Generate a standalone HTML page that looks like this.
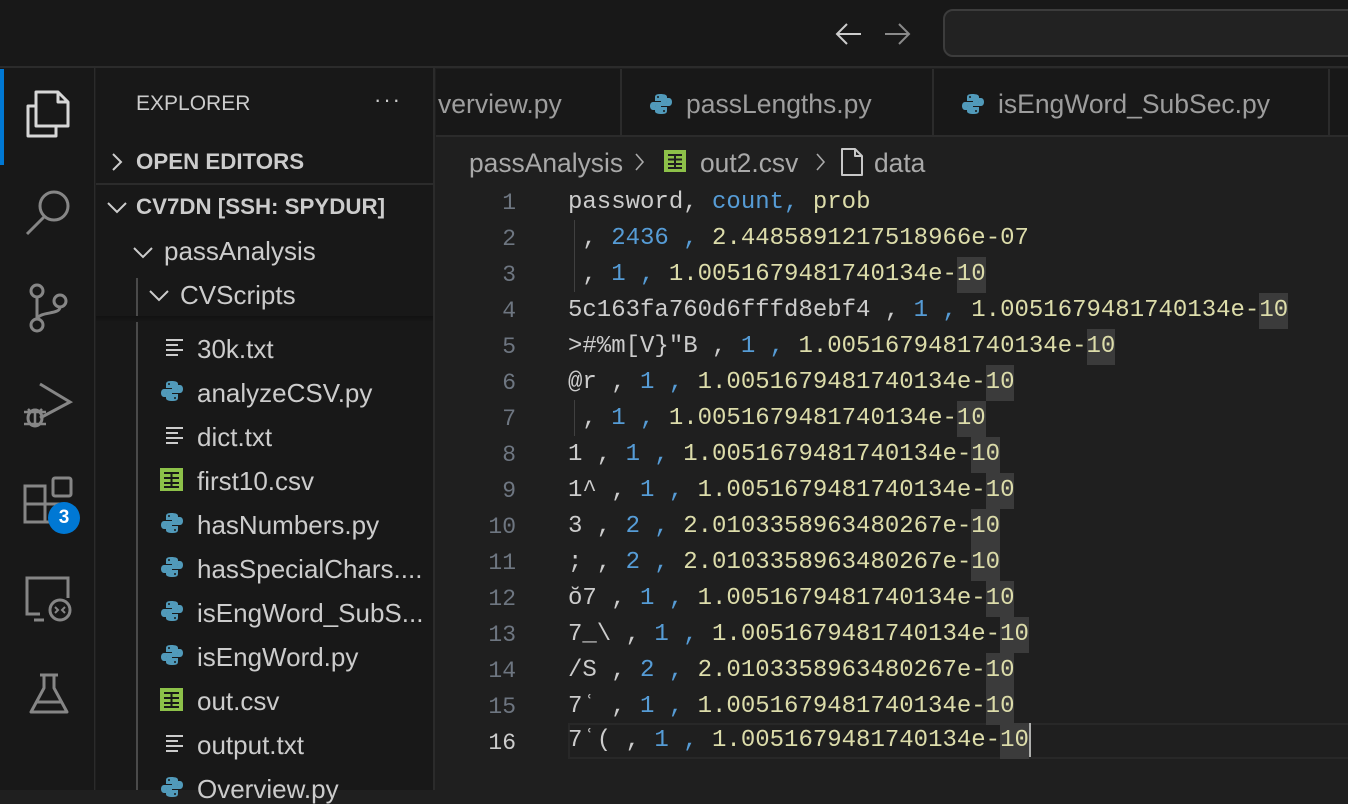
<!DOCTYPE html>
<html><head><meta charset="utf-8"><style>
*{margin:0;padding:0;box-sizing:border-box}
body{width:1348px;height:790px;overflow:hidden;background:#1f1f1f;font-family:"Liberation Sans",sans-serif;position:relative}
.abs{position:absolute}
#title{left:0;top:0;width:1348px;height:68px;background:#181818;border-bottom:2px solid #2b2b2b}
#act{left:0;top:68px;width:95px;height:722px;background:#181818;border-right:1px solid #2b2b2b}
#side{left:96px;top:68px;width:339px;height:722px;background:#181818;border-right:2px solid #2b2b2b}
.st{position:absolute;color:#cccccc;font-size:26px;white-space:nowrap;line-height:30px}
.b{font-weight:bold;font-size:22.3px}
#tabs{left:436px;top:69px;width:912px;height:68px;background:#181818;border-bottom:2px solid #2b2b2b}
.tab{position:absolute;top:0;height:68px;border-right:2px solid #2b2b2b;color:#9d9d9d;font-size:26.5px;line-height:70px;white-space:nowrap}
.ln{position:absolute;left:440px;width:76px;text-align:right;font-family:"Liberation Mono",monospace;font-size:23px;color:#6e7681;line-height:36px;height:36px}
.cl{position:absolute;left:568px;font-family:"Liberation Mono",monospace;font-size:24px;color:#cccccc;line-height:36px;height:36px;white-space:pre;letter-spacing:0}
.n{color:#569cd6}.y{color:#dcdcaa}.h{background:#3b3b3b;color:#dcdcaa;display:inline-block;height:36px}
</style></head><body>
<div id="title" class="abs">
<svg class="abs" style="left:833px;top:20px" width="80" height="28"><path d="M4 14H28M14 4L4 14L14 24" stroke="#cccccc" stroke-width="2" fill="none"/><path d="M56 14H80M70 4L80 14L70 24" stroke="#8a8a8a" stroke-width="2" fill="none" transform="translate(-4 0)"/></svg>
<div class="abs" style="left:943px;top:9px;width:420px;height:48px;border:2px solid #3c3c3c;border-radius:10px;background:#222"></div>
</div>
<div id="act" class="abs">
<div class="abs" style="left:0;top:1px;width:4px;height:96px;background:#0078d4"></div>
<svg class="abs" style="left:25px;top:22px;width:48px;height:52px" viewBox="0 0 48 52"><path d="M12 6H34L44 16V40H12Z M34 6V16H44" fill="none" stroke="#d7d7d7" stroke-width="3" stroke-linejoin="round" transform="translate(-1 -4)"/><path d="M11 16H3V46H31V36" fill="none" stroke="#d7d7d7" stroke-width="3" stroke-linejoin="round"/></svg>
<svg class="abs" style="left:24px;top:118px" width="50" height="52"><circle cx="30" cy="20" r="14" fill="none" stroke="#868686" stroke-width="3"/><path d="M20 31L3 48" stroke="#868686" stroke-width="3"/></svg>
<svg class="abs" style="left:26px;top:215px" width="44" height="52"><circle cx="11" cy="8" r="6" fill="none" stroke="#868686" stroke-width="3"/><circle cx="11" cy="42" r="6" fill="none" stroke="#868686" stroke-width="3"/><circle cx="34" cy="18" r="6" fill="none" stroke="#868686" stroke-width="3"/><path d="M11 14V36M34 24C34 32 14 28 11 36" fill="none" stroke="#868686" stroke-width="3"/></svg>
<svg class="abs" style="left:22px;top:312px" width="52" height="52"><path d="M18 4L48 22L18 38" fill="none" stroke="#868686" stroke-width="3"/><ellipse cx="13" cy="38" rx="7" ry="8" fill="none" stroke="#868686" stroke-width="3"/><path d="M2 32H24M2 44H24M6 29L9 32M20 29L17 32M13 30V46" stroke="#868686" stroke-width="2.5"/></svg>
<svg class="abs" style="left:22px;top:408px" width="52" height="52"><rect x="3" y="10" width="20" height="18" fill="none" stroke="#868686" stroke-width="3"/><rect x="3" y="28" width="20" height="18" fill="none" stroke="#868686" stroke-width="3"/><rect x="23" y="28" width="18" height="18" fill="none" stroke="#868686" stroke-width="3"/><rect x="31" y="2" width="18" height="18" rx="2" fill="none" stroke="#868686" stroke-width="3"/></svg>
<div class="abs" style="left:48px;top:434px;width:32px;height:32px;border-radius:50%;background:#0078d4;color:#fff;font-weight:bold;font-size:19px;text-align:center;line-height:32px">3</div>
<svg class="abs" style="left:24px;top:508px" width="50" height="46"><path d="M16 38H3V2H44V22" fill="none" stroke="#868686" stroke-width="3"/><path d="M10 44H20" stroke="#868686" stroke-width="3"/><circle cx="36" cy="34" r="10" fill="none" stroke="#868686" stroke-width="3"/><path d="M31 31l3 3-3 3M41 31l-3 3 3 3" fill="none" stroke="#868686" stroke-width="2"/></svg>
<svg class="abs" style="left:28px;top:604px" width="42" height="44"><path d="M12 3H30M16 3V16L3 40H39L26 16V3" fill="none" stroke="#868686" stroke-width="3" stroke-linejoin="round"/><path d="M8 30H34" stroke="#868686" stroke-width="3"/></svg>
</div>
<div id="side" class="abs">
<div class="st" style="left:40px;top:21px;font-size:21px;color:#cccccc">EXPLORER</div>
<div class="st" style="left:278px;top:17px;font-size:22px;letter-spacing:2px">···</div>
<svg class="abs" style="left:14px;top:84px" width="14" height="20"><path d="M3 2L11 10L3 18" fill="none" stroke="#ccc" stroke-width="2"/></svg>
<div class="st b" style="left:40px;top:79px">OPEN EDITORS</div>
<div class="abs" style="left:0;top:115px;width:337px;height:2px;background:#2b2b2b"></div>
<svg class="abs" style="left:10px;top:132px" width="22" height="14"><path d="M2 3L11 12L20 3" fill="none" stroke="#ccc" stroke-width="2"/></svg>
<div class="st b" style="left:40px;top:124px">CV7DN [SSH: SPYDUR]</div>
<svg class="abs" style="left:36px;top:177px" width="22" height="14"><path d="M2 3L11 12L20 3" fill="none" stroke="#ccc" stroke-width="2"/></svg>
<div class="st" style="left:68px;top:168px">passAnalysis</div>
<div class="abs" style="left:40px;top:210px;width:2px;height:512px;background:#4a4a4a"></div>
<svg class="abs" style="left:52px;top:220px" width="22" height="14"><path d="M2 3L11 12L20 3" fill="none" stroke="#ccc" stroke-width="2"/></svg>
<div class="st" style="left:84px;top:212px">CVScripts</div>
<div class="abs" style="left:0;top:248px;width:337px;height:6px;background:linear-gradient(#111,#181818)"></div>
</div>
<svg width="0" height="0" style="position:absolute"><defs><g id="py"><path d="M10 1C5 1 5 3 5 5V8H11V9H3C1 9 0 11 0 13S1 17 3 17H5V14C5 12 7 11 9 11H14C16 11 17 10 17 8V4C17 2 15 1 10 1Z" fill="#519aba"/><path d="M12 21C17 21 17 19 17 17V14H11V13H19C21 13 22 11 22 9S21 5 19 5H17V8C17 10 15 11 13 11H8C6 11 5 12 5 14V18C5 20 7 21 12 21Z" fill="#519aba"/><circle cx="8" cy="4" r="1" fill="#181818"/><circle cx="14" cy="18" r="1" fill="#181818"/></g></defs></svg>
<div style="position:absolute;left:0;top:0">
<svg class="abs" style="left:166px;top:338px" width="18" height="18"><path d="M0 2H17M0 7H12M0 12H17M0 17H12" stroke="#ccc" stroke-width="2"/></svg>
<div class="st" style="left:197px;top:334px">30k.txt</div>
<svg class="abs" style="left:161px;top:380px" width="22" height="22"><use href="#py"/></svg>
<div class="st" style="left:197px;top:378px">analyzeCSV.py</div>
<svg class="abs" style="left:166px;top:426px" width="18" height="18"><path d="M0 2H17M0 7H12M0 12H17M0 17H12" stroke="#ccc" stroke-width="2"/></svg>
<div class="st" style="left:197px;top:422px">dict.txt</div>
<svg class="abs" style="left:160px;top:468px" width="23" height="23"><rect width="23" height="23" fill="#8dc149"/><path d="M4 5H19M4 10H19M4 15H19M4 19H19M11.5 5V19" stroke="#181818" stroke-width="2"/></svg>
<div class="st" style="left:197px;top:466px">first10.csv</div>
<svg class="abs" style="left:161px;top:512px" width="22" height="22"><use href="#py"/></svg>
<div class="st" style="left:197px;top:510px">hasNumbers.py</div>
<svg class="abs" style="left:161px;top:556px" width="22" height="22"><use href="#py"/></svg>
<div class="st" style="left:197px;top:554px">hasSpecialChars....</div>
<svg class="abs" style="left:161px;top:600px" width="22" height="22"><use href="#py"/></svg>
<div class="st" style="left:197px;top:598px">isEngWord_SubS...</div>
<svg class="abs" style="left:161px;top:644px" width="22" height="22"><use href="#py"/></svg>
<div class="st" style="left:197px;top:642px">isEngWord.py</div>
<svg class="abs" style="left:160px;top:688px" width="23" height="23"><rect width="23" height="23" fill="#8dc149"/><path d="M4 5H19M4 10H19M4 15H19M4 19H19M11.5 5V19" stroke="#181818" stroke-width="2"/></svg>
<div class="st" style="left:197px;top:686px">out.csv</div>
<svg class="abs" style="left:166px;top:734px" width="18" height="18"><path d="M0 2H17M0 7H12M0 12H17M0 17H12" stroke="#ccc" stroke-width="2"/></svg>
<div class="st" style="left:197px;top:730px">output.txt</div>
<svg class="abs" style="left:161px;top:776px" width="22" height="22"><use href="#py"/></svg>
<div class="st" style="left:197px;top:774px">Overview.py</div>
</div>
<div id="tabs" class="abs">
<div class="tab" style="left:0;width:186px;padding-left:2px">verview.py</div>
<div class="tab" style="left:186px;width:312px;padding-left:64px">passLengths.py</div>
<svg class="abs" style="left:214px;top:24px" width="22" height="22"><use href="#py"/></svg>
<div class="tab" style="left:498px;width:396px;padding-left:64px">isEngWord_SubSec.py</div>
<svg class="abs" style="left:526px;top:24px" width="22" height="22"><use href="#py"/></svg>
</div>
<div class="abs" style="left:469px;top:148px;color:#a9a9a9;font-size:26.4px;white-space:nowrap;line-height:30px">passAnalysis</div>
<svg class="abs" style="left:634px;top:151px" width="12" height="22"><path d="M2 3L9 11L2 19" fill="none" stroke="#a9a9a9" stroke-width="1.6"/></svg>
<svg class="abs" style="left:664px;top:150px" width="22" height="22"><rect width="22" height="22" fill="#8dc149"/><path d="M4 5H18M4 9.5H18M4 14H18M4 18H18M11 5V18" stroke="#1f1f1f" stroke-width="2"/></svg>
<div class="abs" style="left:700px;top:148px;color:#a9a9a9;font-size:26.4px;line-height:30px">out2.csv</div>
<svg class="abs" style="left:815px;top:151px" width="12" height="22"><path d="M2 3L9 11L2 19" fill="none" stroke="#a9a9a9" stroke-width="1.6"/></svg>
<svg class="abs" style="left:840px;top:147px" width="24" height="30"><path d="M2 2H15L22 9V28H2Z M15 2V9H22" fill="none" stroke="#c8c8c8" stroke-width="2" stroke-linejoin="round"/></svg>
<div class="abs" style="left:874px;top:148px;color:#a9a9a9;font-size:26.4px;line-height:30px">data</div>
<div class="abs" style="left:568px;top:723px;width:780px;height:36px;border:2px solid #282828;border-right:none"></div>
<div class="abs" style="left:574px;top:220px;width:1px;height:72px;background:#404040"></div>
<div class="abs" style="left:574px;top:400px;width:1px;height:36px;background:#404040"></div>
<div style="position:absolute;left:0;top:2px;width:1348px;height:760px">
<div class="ln" style="top:183px">1</div><div class="ln" style="top:219px">2</div><div class="ln" style="top:255px">3</div><div class="ln" style="top:291px">4</div><div class="ln" style="top:327px">5</div><div class="ln" style="top:363px">6</div><div class="ln" style="top:399px">7</div><div class="ln" style="top:435px">8</div><div class="ln" style="top:471px">9</div><div class="ln" style="top:507px">10</div><div class="ln" style="top:543px">11</div><div class="ln" style="top:579px">12</div><div class="ln" style="top:615px">13</div><div class="ln" style="top:651px">14</div><div class="ln" style="top:687px">15</div><div class="ln" style="top:723px;color:#cccccc">16</div>
<div class="cl" style="top:183px">password,<span class="n"> count,</span><span class="y"> prob</span></div>
<div class="cl" style="top:219px"> ,<span class="n"> 2436 ,</span><span class="y"> 2.4485891217518966e-07</span></div>
<div class="cl" style="top:255px"> ,<span class="n"> 1 ,</span><span class="y"> 1.0051679481740134e-<span class="h">10</span></span></div>
<div class="cl" style="top:291px">5c163fa760d6fffd8ebf4 ,<span class="n"> 1 ,</span><span class="y"> 1.0051679481740134e-<span class="h">10</span></span></div>
<div class="cl" style="top:327px">&gt;#%m[V}"B ,<span class="n"> 1 ,</span><span class="y"> 1.0051679481740134e-<span class="h">10</span></span></div>
<div class="cl" style="top:363px">@r ,<span class="n"> 1 ,</span><span class="y"> 1.0051679481740134e-<span class="h">10</span></span></div>
<div class="cl" style="top:399px"> ,<span class="n"> 1 ,</span><span class="y"> 1.0051679481740134e-<span class="h">10</span></span></div>
<div class="cl" style="top:435px">1 ,<span class="n"> 1 ,</span><span class="y"> 1.0051679481740134e-<span class="h">10</span></span></div>
<div class="cl" style="top:471px">1^ ,<span class="n"> 1 ,</span><span class="y"> 1.0051679481740134e-<span class="h">10</span></span></div>
<div class="cl" style="top:507px">3 ,<span class="n"> 2 ,</span><span class="y"> 2.0103358963480267e-<span class="h">10</span></span></div>
<div class="cl" style="top:543px">; ,<span class="n"> 2 ,</span><span class="y"> 2.0103358963480267e-<span class="h">10</span></span></div>
<div class="cl" style="top:579px">ŏ7 ,<span class="n"> 1 ,</span><span class="y"> 1.0051679481740134e-<span class="h">10</span></span></div>
<div class="cl" style="top:615px">7_\ ,<span class="n"> 1 ,</span><span class="y"> 1.0051679481740134e-<span class="h">10</span></span></div>
<div class="cl" style="top:651px">/S ,<span class="n"> 2 ,</span><span class="y"> 2.0103358963480267e-<span class="h">10</span></span></div>
<div class="cl" style="top:687px">7ʿ ,<span class="n"> 1 ,</span><span class="y"> 1.0051679481740134e-<span class="h">10</span></span></div>
<div class="cl" style="top:721px">7ʿ( ,<span class="n"> 1 ,</span><span class="y"> 1.0051679481740134e-<span class="h">10</span></span><span style="display:inline-block;width:2px;height:34px;background:#aeafad;vertical-align:top"></span></div>
</div>
</body></html>
